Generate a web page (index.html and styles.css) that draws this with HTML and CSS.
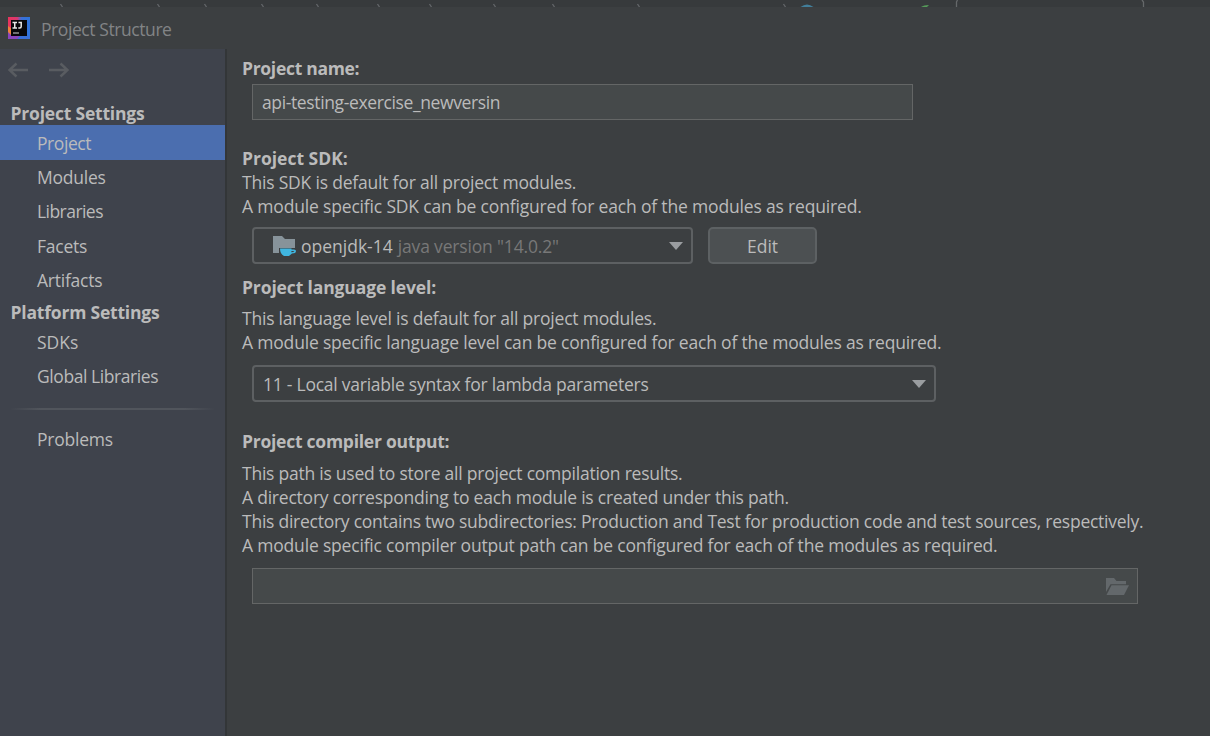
FILE: index.html
```html
<!DOCTYPE html>
<html lang="en">
<head>
<meta charset="utf-8">
<title>Project Structure</title>
<link rel="stylesheet" href="styles.css">
</head>
<body>
<svg class="strip" width="1210" height="7" viewBox="0 0 1210 7" fill="none">
  <path d="M60.500 4l2 3M157.500 4l2 3M204.500 4l2 3M261.500 4l2 3M316.500 4l2 3M377.500 4l2 3M429.500 4l2 3M493.500 4l2 3M552.500 4l2 3M637.500 4l2 3M783.500 4l2 3" stroke="#64676a" stroke-width="1.300"/>
  <path d="M800.500 7q6.500-5 13 0z" fill="#427e9a"/>
  <path d="M921 7q2.500-2 8-2l-2 2z" fill="#559b59"/>
  <path d="M956.500 7v-5l1-2M1143.500 7v-5l-1.500-2" stroke="#65686a" stroke-width="1.300"/>
</svg>
<header class="titlebar">
  <svg class="logo" width="22" height="22" viewBox="0 0 22 22">
    <defs><linearGradient id="lg" x1="0" y1="0" x2="1" y2="0"><stop offset="0" stop-color="#e8345c"/><stop offset=".42" stop-color="#d93870"/><stop offset=".6" stop-color="#3c6fd6"/><stop offset="1" stop-color="#2d74dc"/></linearGradient></defs>
    <path d="M0 0h22v22H0z" fill="url(#lg)"/>
    <path d="M0 9l5 4v9L0 16z" fill="#f0803a"/>
    <path d="M0 15l4 4h9v3H0z" fill="#8a45bd"/>
    <path d="M12 19h10v3H9z" fill="#3970d8"/>
    <path d="M3 3h16v16H3z" fill="#08080b"/>
    <path d="M4.500 5.500h4.500M6.750 5.500v5.500M4.500 11h4.500M10.500 5.500h2.700v4q0 1.500-1.500 1.500h-1.400" fill="none" stroke="#e8e8e8" stroke-width="1.500"/>
    <path d="M5 16h6" stroke="#b5b5b5" stroke-width="1.200"/>
  </svg>
  <h1 class="title">Project Structure</h1>
</header>
<div class="body">
  <nav class="sidebar">
    <div class="history">
      <svg width="20" height="16" viewBox="0 0 20 16"><path d="M20 8H1.500M8.500 1.500L1.500 8l7 6.500"/></svg>
      <svg width="20" height="16" viewBox="0 0 20 16"><path d="M0 8h18.500M11.500 1.500l7 6.500-7 6.500"/></svg>
    </div>
    <h2 class="group g1">Project Settings</h2>
    <ul class="items">
      <li class="item selected tight">Project</li>
      <li class="item">Modules</li>
      <li class="item tighter">Libraries</li>
      <li class="item">Facets</li>
      <li class="item">Artifacts</li>
    </ul>
    <h2 class="group g2">Platform Settings</h2>
    <ul class="items">
      <li class="item sdks">SDKs</li>
      <li class="item tight">Global Libraries</li>
    </ul>
    <div class="divider"></div>
    <ul class="items"><li class="item">Problems</li></ul>
  </nav>
  <main class="content">
    <section class="name">
      <h3 class="l-name">Project name:</h3>
      <div class="field name-field"><span>api-testing-exercise_newversin</span></div>
    </section>
    <section class="sdk">
      <h3>Project SDK:</h3>
      <p class="t1">This SDK is default for all project modules.</p>
      <p class="t2">A module specific SDK can be configured for each of the modules as required.</p>
      <div class="controls">
        <div class="combo sdk-combo">
          <svg class="sdk-icon" width="24" height="22" viewBox="0 0 24 22"><path d="M0 1h9l3 3h10v9H6v5H0z" fill="#87939a"/><path d="M7 13.500h11.500v1h2.500q2 0 2 1.500 0 2.500-4 2.500l-3 2.500h-5q-4-2-4-7.500z" fill="#40b6e0"/><path d="M18.500 16h2.800q-.5 1.200-3 1.300z" fill="#3c3f41"/></svg>
          <span class="sdk-name">openjdk-14</span><span class="muted">java version "14.0.2"</span>
          <svg class="caret" width="14" height="8" viewBox="0 0 14 8"><path d="M0 0h14L7 8z"/></svg>
        </div>
        <button class="edit">Edit</button>
      </div>
    </section>
    <section class="level">
      <h3 class="l-level">Project language level:</h3>
      <p class="first t3">This language level is default for all project modules.</p>
      <p class="t4">A module specific language level can be configured for each of the modules as required.</p>
      <div class="combo level-combo"><span class="t5">11 - Local variable syntax for lambda parameters</span>
        <svg class="caret" width="14" height="8" viewBox="0 0 14 8"><path d="M0 0h14L7 8z"/></svg>
      </div>
    </section>
    <section class="output">
      <h3 class="l-output">Project compiler output:</h3>
      <p class="first t6">This path is used to store all project compilation results.</p>
      <p class="t7">A directory corresponding to each module is created under this path.</p>
      <p class="t8">This directory contains two subdirectories: Production and Test for production code and test sources, respectively.</p>
      <p class="t9">A module specific compiler output path can be configured for each of the modules as required.</p>
      <div class="field path-field">
        <svg width="23" height="18" viewBox="0 0 23 18" fill="#63686b"><path d="M0 0h8l2.500 3H20v3.200H4.500L0 14z"/><path d="M5.500 7.300H23L18 17H.500z"/></svg>
      </div>
    </section>
  </main>
</div>
</body>
</html>
```
FILE: styles.css
```css
* { box-sizing: border-box; }
body {
  margin: 0;
  width: 1210px;
  height: 736px;
  overflow: hidden;
  display: flex;
  flex-direction: column;
  background: #3c3f41;
  color: #bbbbbb;
  font: 17.5px/24px "Open Sans", "Noto Sans", sans-serif;
}
h1, h2, h3, p, ul { margin: 0; padding: 0; font-size: inherit; white-space: nowrap; }
h3, p { width: max-content; }
ul { list-style: none; }
svg { display: block; flex: none; }
.strip { background: #373a3c; }
.titlebar { height: 42px; padding: 0 8px; display: flex; align-items: center; gap: 11px; }
.title { color: #828486; font-weight: 400; padding-top: 2px; letter-spacing: -.42px; }
.body { flex: 1; display: flex; }
.sidebar { width: 227px; background: #3f434c; border-right: 2px solid #333638; }
.history { height: 52px; padding: 13px 8px 0; display: flex; gap: 21px; }
.history path { fill: none; stroke: #595c61; stroke-width: 2.5; }
.group { height: 24px; padding-left: 10.5px; font-weight: 700; letter-spacing: -.2px; }
.g2 { height: 25px; margin-top: 2px; }
.item { height: 34.5px; padding-left: 37px; line-height: 35px; letter-spacing: -.24px; }
.tight { letter-spacing: -.43px; }
.tighter { letter-spacing: -.55px; }
.sdks { letter-spacing: 0; }
.selected { background: #4b6eaf; line-height: 36px; }
.divider { height: 2px; margin: 14px 10px 12px; background: linear-gradient(90deg, transparent, #51555c 15%, #51555c 85%, transparent); }
.content { flex: 1; padding: 7px 0 0 15px; }
.l-name { letter-spacing: -.3px; }
.field { height: 36px; margin-left: 10px; border: 1px solid #646666; background: #45494a; display: flex; align-items: center; }
.name-field { width: 661px; margin-top: 4px; padding-left: 9px; letter-spacing: -.37px; }
.sdk { margin-top: 26px; }
.t1 { letter-spacing: -.2px; }
.t2 { letter-spacing: -.17px; }
.controls { display: flex; gap: 15px; margin: 9px 0 0 10px; }
.combo { height: 37px; border: 2px solid #5d6062; border-radius: 4px; display: flex; align-items: center; padding: 0 8px; white-space: nowrap; }
.sdk-combo { width: 441px; padding-left: 19px; }
.sdk-icon { margin-right: 4px; }
.muted { color: #787878; margin-left: 5px; letter-spacing: -.17px; }
.caret { margin-left: auto; fill: #9a9da0; }
.edit { width: 109px; height: 37px; padding: 0; border: 2px solid #5d6163; border-radius: 5px; background: #4c5052; color: #bbbbbb; font: inherit; }
.level { margin-top: 11px; }
.l-level { letter-spacing: -.13px; }
.first { margin-top: 7px; }
.t3 { letter-spacing: -.21px; }
.t4 { letter-spacing: -.184px; }
.t5 { letter-spacing: -.245px; }
.level-combo { width: 684px; margin: 11px 0 0 10px; padding-left: 9px; }
.output { margin-top: 27px; }
.l-output { letter-spacing: -.25px; }
.output .first { margin-top: 8px; }
.t6 { letter-spacing: -.237px; }
.t7 { letter-spacing: -.217px; }
.t8 { letter-spacing: -.248px; }
.t9 { letter-spacing: -.187px; }
.path-field { width: 886px; margin-top: 11px; padding: 1px 8px 0 0; justify-content: flex-end; }
```
